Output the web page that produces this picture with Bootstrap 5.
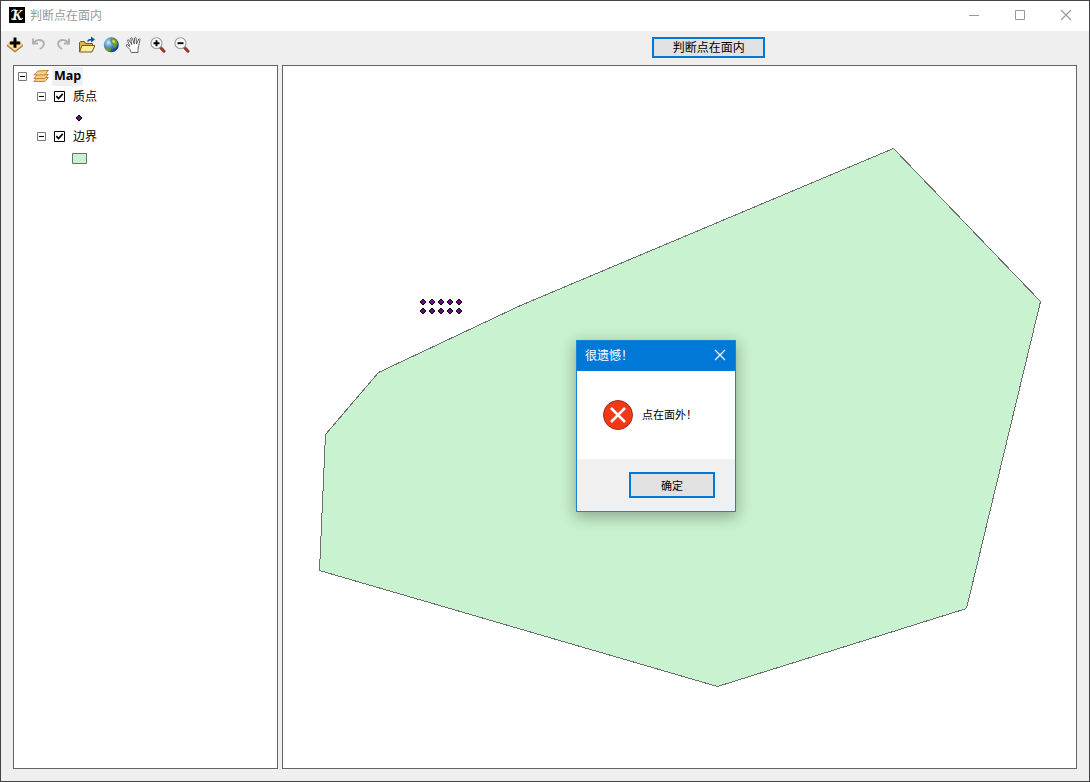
<!DOCTYPE html>
<html lang="zh-CN">
<head>
<meta charset="utf-8">
<meta name="viewport" content="width=device-width, initial-scale=1">
<title>判断点在面内</title>
<link href="https://cdn.jsdelivr.net/npm/bootstrap@5.3.0/dist/css/bootstrap.min.css" rel="stylesheet">
<style>
body{font:12px/18px "Liberation Sans","Noto Sans CJK SC",sans-serif;color:#000;background:#efefef}
.cjk{font-family:"Noto Sans CJK SC",sans-serif}
.win{height:782px;border:1px solid #434346;background:#efefef;overflow:hidden}
.titlebar{height:30px;padding:0 17px 2px 8px;color:#999}
.caps{gap:34px}
.tools{height:34px;padding-left:5px;padding-top:5px}
.icons{gap:6.9px}
.icons svg{width:17px;height:18px}
.winbtn{border:2px solid #0078d7;background:#e1e1e1;border-radius:0;padding:0;color:#000;font-size:12px;line-height:15px}
.judge{width:113px;height:21px;margin-left:462px;margin-top:1px;padding-bottom:2px}
.panes{height:704px;padding:0 12px;gap:4px}
.pane{border:1px solid #646464;background:#fff}
.tree{width:265px}
.tree-row{height:20px}
.layer-name{padding-bottom:1px}
.maplabel{font:bold 12.5px/17px "Open Sans",sans-serif;background:#f0f0f0;padding:0 2px 2px;height:19px}
.dlg{left:576px;top:340px;width:160px;height:172px;border:1px solid #1883d7;box-shadow:0 4px 14px 1px rgba(0,0,0,.3)}
.dlg-head{height:30px;background:#0078d7;color:#fff;padding:0 9px 2px 8px}
.dlg-body{height:88px;padding-left:26px;gap:9px;font-size:11px}
.dlg-body span{padding-bottom:2px}
.dlg-foot{height:52px;background:#f0f0f0;padding:13px 20px 0 0}
.ok{width:86px;height:26px;font-size:11px;line-height:20px;padding-bottom:1px}
</style>
</head>
<body>
<svg class="d-none" aria-hidden="true">
  <symbol id="minus" viewBox="0 0 9 9"><path d="M.5.5h8v8h-8z" fill="#fff" stroke="#777"/><path d="M2 4.5h5" stroke="#000"/></symbol>
  <symbol id="check" viewBox="0 0 11 11"><path d="M.5.5h10v10h-10z" fill="#fff" stroke="#000"/><path d="M2.300 5.200l2.200 2.300 4.300-4.600" fill="none" stroke="#000" stroke-width="1.700"/></symbol>
  <symbol id="dot" viewBox="0 0 6 6"><path d="M2 0h2v1h1v1h1v2H5v1H4v1H2V5H1V4H0V2h1V1h1z" fill="#000"/><path d="M2 1h2v1h1v2H4v1H2V4H1V2h1z" fill="#70008c"/></symbol>
</svg>
<div class="win d-flex flex-column">
  <header class="titlebar bg-white d-flex align-items-center justify-content-between">
    <div class="d-flex align-items-center cjk">
      <svg width="16" height="16" class="me-1"><path d="M0 0h16v16H0z"/><text x="3" y="13" font-family="Liberation Serif" font-style="italic" font-weight="bold" font-size="15" fill="#fff">K</text><path d="M2 4.500Q4 2 7 3M2 12h5M10 12q2 1 4-1" fill="none" stroke="#fff"/></svg>
      <span style="margin-left:1px">判断点在面内</span>
    </div>
    <div class="d-flex caps">
      <svg width="12" height="12"><path d="M1 6.500h10" stroke="#999"/></svg>
      <svg width="12" height="12"><path d="M1.500 1.500h9v9h-9z" fill="none" stroke="#999"/></svg>
      <svg width="12" height="12"><path d="M1 1l10 10M11 1L1 11" stroke="#999" stroke-width="1.100"/></svg>
    </div>
  </header>
  <div class="tools d-flex align-items-start">
    <div class="d-flex icons">
      <svg viewBox="0 0 17 18"><path d="M1 9l8-5.500L17 9l-8 6z" fill="#ffdf95" stroke="#d0a868" stroke-width=".8"/><path d="M1 9.500l8 6.200 8-6.200" fill="none" stroke="#a87a3c" stroke-width="1.300"/><path d="M9 1.500v10.300M3.800 7h10.400" stroke="#000" stroke-width="2.900"/></svg>
      <svg viewBox="0 0 17 18"><path d="M3 2.500v5h5M3.300 7C6 3.500 11.500 3 13.500 6c1.300 3-1 5.500-3.500 7" fill="none" stroke="#b0b0b0" stroke-width="1.900"/></svg>
      <svg viewBox="0 0 17 18"><path d="M15 2.500v5h-5M14.700 7C12 3.500 6.500 3 4.500 6c-1.300 3 1 5.500 3.500 7" fill="none" stroke="#b0b0b0" stroke-width="1.900"/></svg>
      <svg viewBox="0 0 17 18"><path d="M1.500 15.500v-9l1-1h4l1 2h7v3" fill="#d9b548" stroke="#7a5a1c"/><path d="M1.500 16L4 9.500h13L14 16z" fill="#ffec96" stroke="#7a5a1c"/><path d="M9.500 5.500q1-2 4-2" fill="none" stroke="#0d5790" stroke-width="1.600"/><path d="M13 .5l4 3-4 3z" fill="#0d5790"/></svg>
      <svg viewBox="0 0 17 18"><defs><radialGradient id="gl" cx=".32" cy=".35" r=".72"><stop offset="0" stop-color="#c8eaff"/><stop offset=".5" stop-color="#4088cc"/><stop offset="1" stop-color="#0d3472"/></radialGradient></defs><circle cx="9.300" cy="8.800" r="7.500" fill="url(#gl)"/><path d="M8 3q4-2 6.500 1l1.300 4-2.500 4-2-1 .3-2.500L9 7zM3 10l4 1 2 2-1 3q-4-1-5-4z" fill="#6b9b2c"/><path d="M10 3.500l3 1 .5 3-3-1z" fill="#c5d45d"/></svg>
      <svg viewBox="0 0 17 18"><path d="M6.200 16.500L5 13.500 1.500 10q-.8-1.400.8-1.400L5 10.500 2.700 5q-.2-1.600 1-1.200L6.800 8.500 5.700 2.600q.3-1.600 1.500-.4L9.300 8l.2-6q.8-1.500 1.600 0l.4 6L13.700 3q1.200-.8 1.300.7l-1.200 5.500L13 13v3.500z" fill="#fff" stroke="#555" stroke-width=".9"/></svg>
      <svg viewBox="0 0 17 18"><path d="M11 11l4 4.200" stroke="#923725" stroke-width="3" stroke-linecap="round"/><circle cx="7.500" cy="7.200" r="5.500" fill="#f6f9fb" stroke="#999" stroke-width="1.100"/><path d="M7.500 4.200v6M4.500 7.200h6" stroke="#000" stroke-width="1.900"/></svg>
      <svg viewBox="0 0 17 18"><path d="M11 11l4 4.200" stroke="#923725" stroke-width="3" stroke-linecap="round"/><circle cx="7.500" cy="7.200" r="5.500" fill="#f6f9fb" stroke="#999" stroke-width="1.100"/><path d="M4.500 7.200h6" stroke="#000" stroke-width="1.900"/></svg>
    </div>
    <button class="btn winbtn judge cjk">判断点在面内</button>
  </div>
  <main class="panes d-flex">
    <aside class="pane tree cjk">
      <div class="tree-row d-flex align-items-center" style="padding-left:4px">
        <svg width="9" height="9"><use href="#minus"/></svg>
        <svg width="16" height="14" style="margin:0 3px 0 6px"><g fill="#f8cf86" stroke="#c0843c"><path d="M.8 12.500l4-4h10.500l-3.500 4z"/><path d="M.8 9.500l4-4h10.500l-3.500 4z"/><path d="M.8 6l4-4 10.500-.7L12 6z"/></g></svg>
        <span class="maplabel">Map</span>
      </div>
      <div class="tree-row d-flex align-items-center" style="padding-left:23px">
        <svg width="9" height="9"><use href="#minus"/></svg>
        <svg width="11" height="11" style="margin:0 8px"><use href="#check"/></svg><span class="layer-name">质点</span>
      </div>
      <div class="tree-row d-flex align-items-center" style="padding-left:62px">
        <svg width="6" height="6" style="margin-top:4px"><use href="#dot"/></svg>
      </div>
      <div class="tree-row d-flex align-items-center" style="padding-left:23px">
        <svg width="9" height="9"><use href="#minus"/></svg>
        <svg width="11" height="11" style="margin:0 8px"><use href="#check"/></svg><span class="layer-name">边界</span>
      </div>
      <div class="tree-row d-flex align-items-center" style="padding-left:58px">
        <svg width="15" height="11" style="margin-top:5px"><path d="M.5.5h14v10H.5z" fill="#c9f2d0" stroke="#6e6e6e"/></svg>
      </div>
    </aside>
    <section class="pane flex-grow-1">
      <svg class="d-block" width="793" height="702" viewBox="283 66 793 702">
        <path d="M893.500 148.500L1040.500 301.500 966.500 608.500 717.500 686.500 319.500 570.500 325.500 434.500 378.500 372.500 520.500 305.500z" fill="#c9f2d0" stroke="#6e6e6e" shape-rendering="crispEdges"/>
        <g id="dots"><use href="#dot" x="420" y="299" width="6" height="6"/><use href="#dot" x="429" y="299" width="6" height="6"/><use href="#dot" x="438" y="299" width="6" height="6"/><use href="#dot" x="447" y="299" width="6" height="6"/><use href="#dot" x="456" y="299" width="6" height="6"/></g>
        <use href="#dots" y="9"/>
      </svg>
    </section>
  </main>
</div>
<div class="dlg position-absolute bg-white cjk" role="dialog">
  <div class="dlg-head d-flex align-items-center justify-content-between"><span>很遗憾！</span>
    <svg width="12" height="12"><path d="M1 1l10 10M11 1L1 11" stroke="#fff" stroke-width="1.200"/></svg></div>
  <div class="dlg-body d-flex align-items-center">
    <svg width="30" height="30"><circle cx="15" cy="15" r="14.500" fill="#f03a17" stroke="#a52b1a"/><path d="M8 8l14 14M22 8L8 22" stroke="#fff" stroke-width="2.500"/></svg>
    <span>点在面外！</span>
  </div>
  <div class="dlg-foot d-flex justify-content-end align-items-start"><button class="btn winbtn ok">确定</button></div>
</div>
</body>
</html>
